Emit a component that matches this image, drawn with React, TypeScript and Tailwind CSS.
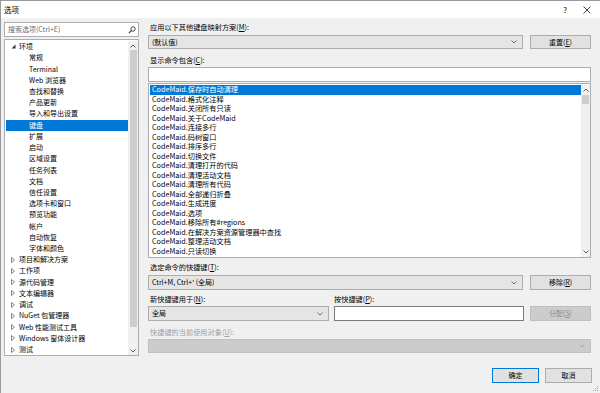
import React from "react";

const FONT = "font-['Noto_Sans_CJK_SC','Noto_Sans',sans-serif]";

const envChildren = [
  "常规",
  "Terminal",
  "Web 浏览器",
  "查找和替换",
  "产品更新",
  "导入和导出设置",
  "键盘",
  "扩展",
  "启动",
  "区域设置",
  "任务列表",
  "文档",
  "信任设置",
  "选项卡和窗口",
  "预览功能",
  "帐户",
  "自动恢复",
  "字体和颜色",
];

const groups = [
  "项目和解决方案",
  "工作项",
  "源代码管理",
  "文本编辑器",
  "调试",
  "NuGet 包管理器",
  "Web 性能测试工具",
  "Windows 窗体设计器",
  "测试",
];

const commands = [
  "保存时自动清理",
  "格式化注释",
  "关闭所有只读",
  "关于CodeMaid",
  "连接多行",
  "码树窗口",
  "排序多行",
  "切换文件",
  "清理打开的代码",
  "清理活动文档",
  "清理所有代码",
  "全部递归折叠",
  "生成进度",
  "选项",
  "移除所有#regions",
  "在解决方案资源管理器中查找",
  "整理活动文档",
  "只读切换",
];

function Chevron({ color = "#606060" }: { color?: string }) {
  return (
    <svg width="6" height="4" viewBox="0 0 6 4" className="shrink-0">
      <path d="M0.5 0.5 L3 3 L5.5 0.5" fill="none" stroke={color} strokeWidth="0.9" />
    </svg>
  );
}

function Mn({ children }: { children: React.ReactNode }) {
  return <span className="underline underline-offset-1">{children}</span>;
}

function ScrollArrow({ up }: { up: boolean }) {
  return (
    <svg width="6" height="4" viewBox="0 0 6 4">
      <path
        d={up ? "M0.5 3.5 L3 1 L5.5 3.5" : "M0.5 0.5 L3 3 L5.5 0.5"}
        fill="none"
        stroke="#606060"
        strokeWidth="1"
      />
    </svg>
  );
}

function TitleBar() {
  return (
    <div className="flex h-[17px] items-center justify-between bg-white pl-[3px] pr-[9px] text-[7.5px] text-black">
      <span>选项</span>
      <div className="flex items-center gap-[16px]">
        <span className="text-[8px] leading-none">?</span>
        <svg width="8" height="8" viewBox="0 0 8 8">
          <path d="M0.5 0.5 L7.5 7.5 M7.5 0.5 L0.5 7.5" stroke="#111" strokeWidth="0.8" />
        </svg>
      </div>
    </div>
  );
}

function SearchBox() {
  return (
    <div className="flex h-[15px] items-center justify-between border border-[#abadb3] bg-white pl-[3px] pr-[2px]">
      <span className="text-[7px] text-[#6d6d6d]">搜索选项(Ctrl+E)</span>
      <svg width="8" height="8" viewBox="0 0 8 8">
        <circle cx="5" cy="3" r="2.2" fill="none" stroke="#333" strokeWidth="0.9" />
        <path d="M3.4 4.6 L0.8 7.2" stroke="#333" strokeWidth="1.1" />
      </svg>
    </div>
  );
}

function Tree() {
  return (
    <div className="mt-[2px] flex h-[317px] border border-[#abadb3] bg-white pl-[1px] pt-[1px] text-[7px] text-black">
      <div className="flex flex-1 flex-col">
        <div className="flex h-[11.25px] items-center leading-none">
          <span className="flex w-[13px] justify-end pr-[3px]">
            <svg width="5" height="5" viewBox="0 0 5 5">
              <path d="M4.5 0.5 L4.5 4.5 L0.5 4.5 Z" fill="#333" />
            </svg>
          </span>
          <span>环境</span>
        </div>
        {envChildren.map((item) => (
          <div
            key={item}
            className={
              item === "键盘"
                ? "flex h-[11.25px] items-center bg-[#0078d7] pl-[23px] leading-none text-white"
                : "flex h-[11.25px] items-center pl-[23px] leading-none"
            }
          >
            {item}
          </div>
        ))}
        {groups.map((item) => (
          <div key={item} className="flex h-[11.25px] items-center leading-none">
            <span className="flex w-[13px] justify-end pr-[4px]">
              <svg width="4" height="6" viewBox="0 0 4 6">
                <path d="M0.5 0.5 L3.5 3 L0.5 5.5 Z" fill="none" stroke="#555" strokeWidth="0.7" />
              </svg>
            </span>
            <span>{item}</span>
          </div>
        ))}
      </div>
      <div className="flex w-[10px] flex-col items-center bg-[#f0f0f0] pb-[2px] pt-[3px]">
        <ScrollArrow up />
        <div className="mt-[2px] h-[277px] w-[7px] bg-[#cdcdcd]" />
        <div className="mt-auto">
          <ScrollArrow up={false} />
        </div>
      </div>
    </div>
  );
}

function Combo({
  text,
  className,
  disabled,
}: {
  text?: React.ReactNode;
  className: string;
  disabled?: boolean;
}) {
  return (
    <div
      className={
        (disabled
          ? "border-[#bfbfbf] bg-[#cccccc] "
          : "border-[#adadad] bg-[#e5e5e5] ") +
        "flex items-center justify-between border pl-[3px] pr-[5px] text-[7px] " +
        className
      }
    >
      <span>{text}</span>
      <Chevron color={disabled ? "#9a9a9a" : "#606060"} />
    </div>
  );
}

function Button({
  children,
  className,
  disabled,
  focused,
}: {
  children: React.ReactNode;
  className: string;
  disabled?: boolean;
  focused?: boolean;
}) {
  let tone = "border-[#adadad] bg-[#e1e1e1] text-black";
  if (disabled) tone = "border-[#bfbfbf] bg-[#cccccc] text-[#8a8a8a]";
  if (focused) tone = "border-[#0078d7] bg-[#e1e1e1] text-black";
  return (
    <div className={"flex items-center justify-center border text-[7px] " + tone + " " + className}>
      {children}
    </div>
  );
}

function CommandList() {
  return (
    <div className="mt-[1px] flex h-[175px] border border-[#abadb3] bg-white pl-[1px] pt-[1px] text-[7.2px]">
      <div className="flex flex-1 flex-col">
        {commands.map((cmd, i) => (
          <div
            key={cmd}
            className={
              i === 0
                ? "flex h-[9.5px] items-center bg-[#0078d7] pl-[2px] leading-none text-white"
                : "flex h-[9.5px] items-center pl-[2px] leading-none text-black"
            }
          >
            CodeMaid.{cmd}
          </div>
        ))}
      </div>
      <div className="flex w-[9px] flex-col items-center bg-[#f0f0f0] pb-[3px] pt-[3px]">
        <ScrollArrow up />
        <div className="mt-[3px] h-[9px] w-[7px] bg-[#cdcdcd]" />
        <div className="mt-auto">
          <ScrollArrow up={false} />
        </div>
      </div>
    </div>
  );
}

function RightPanel() {
  return (
    <div className="flex w-[443px] flex-col text-black">
      <div className="mt-[4px] h-[10px] pl-[2px] text-[7.2px] leading-[10px]">
        应用以下其他键盘映射方案(<Mn>M</Mn>):
      </div>
      <div className="mt-[3px] flex gap-[7px]">
        <Combo text="(默认值)" className="h-[14px] w-[375px]" />
        <Button className="h-[14px] flex-1">
          重置(<Mn>E</Mn>)
        </Button>
      </div>
      <div className="mt-[6px] h-[10px] pl-[2px] text-[7.2px] leading-[10px]">
        显示命令包含(<Mn>C</Mn>):
      </div>
      <div className="mt-[2px] h-[15px] border border-[#abadb3] bg-white" />
      <CommandList />
      <div className="mt-[4px] h-[10px] pl-[2px] text-[7.2px] leading-[10px]">
        选定命令的快捷键(<Mn>T</Mn>):
      </div>
      <div className="mt-[3px] flex gap-[7px]">
        <Combo text="Ctrl+M, Ctrl+' (全局)" className="h-[15px] w-[375px]" />
        <Button className="h-[15px] flex-1">
          移除(<Mn>R</Mn>)
        </Button>
      </div>
      <div className="mt-[4px] flex h-[10px] text-[7.2px] leading-[10px]">
        <span className="w-[186px] pl-[2px]">
          新快捷键用于(<Mn>N</Mn>):
        </span>
        <span>
          按快捷键(<Mn>P</Mn>):
        </span>
      </div>
      <div className="mt-[2px] flex">
        <Combo text="全局" className="h-[15px] w-[181px]" />
        <div className="ml-[5px] h-[15px] w-[190px] border border-[#7a7a7a] bg-white" />
        <Button disabled className="ml-[6px] h-[15px] flex-1">
          分配(<Mn>S</Mn>)
        </Button>
      </div>
      <div className="mt-[6px] h-[10px] pl-[2px] text-[7.2px] leading-[10px] text-[#a0a0a0]">
        快捷键的当前使用对象(<Mn>U</Mn>):
      </div>
      <Combo disabled className="mt-[2px] h-[14px] w-full" />
    </div>
  );
}

export default function App() {
  return (
    <div className={"flex h-[393px] w-[600px] flex-col overflow-hidden border-l border-t border-[#9a9a9a] bg-[#f0f0f0] " + FONT}>
      <TitleBar />
      <div className="flex h-[342px]">
        <div className="ml-[3px] mt-[4px] flex w-[135px] flex-col">
          <SearchBox />
          <Tree />
        </div>
        <div className="ml-[9px]">
          <RightPanel />
        </div>
      </div>
      <div className="flex justify-end gap-[6px] pr-[8px] pt-[8px]">
        <Button focused className="h-[15px] w-[47px]">
          确定
        </Button>
        <Button className="h-[15px] w-[47px]">取消</Button>
      </div>
      <div className="mt-auto flex justify-end pb-[1px] pr-[1px]">
        <svg width="6" height="6" viewBox="0 0 6 6">
          <rect x="4" y="0" width="1" height="1" fill="#a0a0a0" />
          <rect x="2" y="2" width="1" height="1" fill="#a0a0a0" />
          <rect x="4" y="2" width="1" height="1" fill="#a0a0a0" />
          <rect x="0" y="4" width="1" height="1" fill="#a0a0a0" />
          <rect x="2" y="4" width="1" height="1" fill="#a0a0a0" />
          <rect x="4" y="4" width="1" height="1" fill="#a0a0a0" />
        </svg>
      </div>
    </div>
  );
}
